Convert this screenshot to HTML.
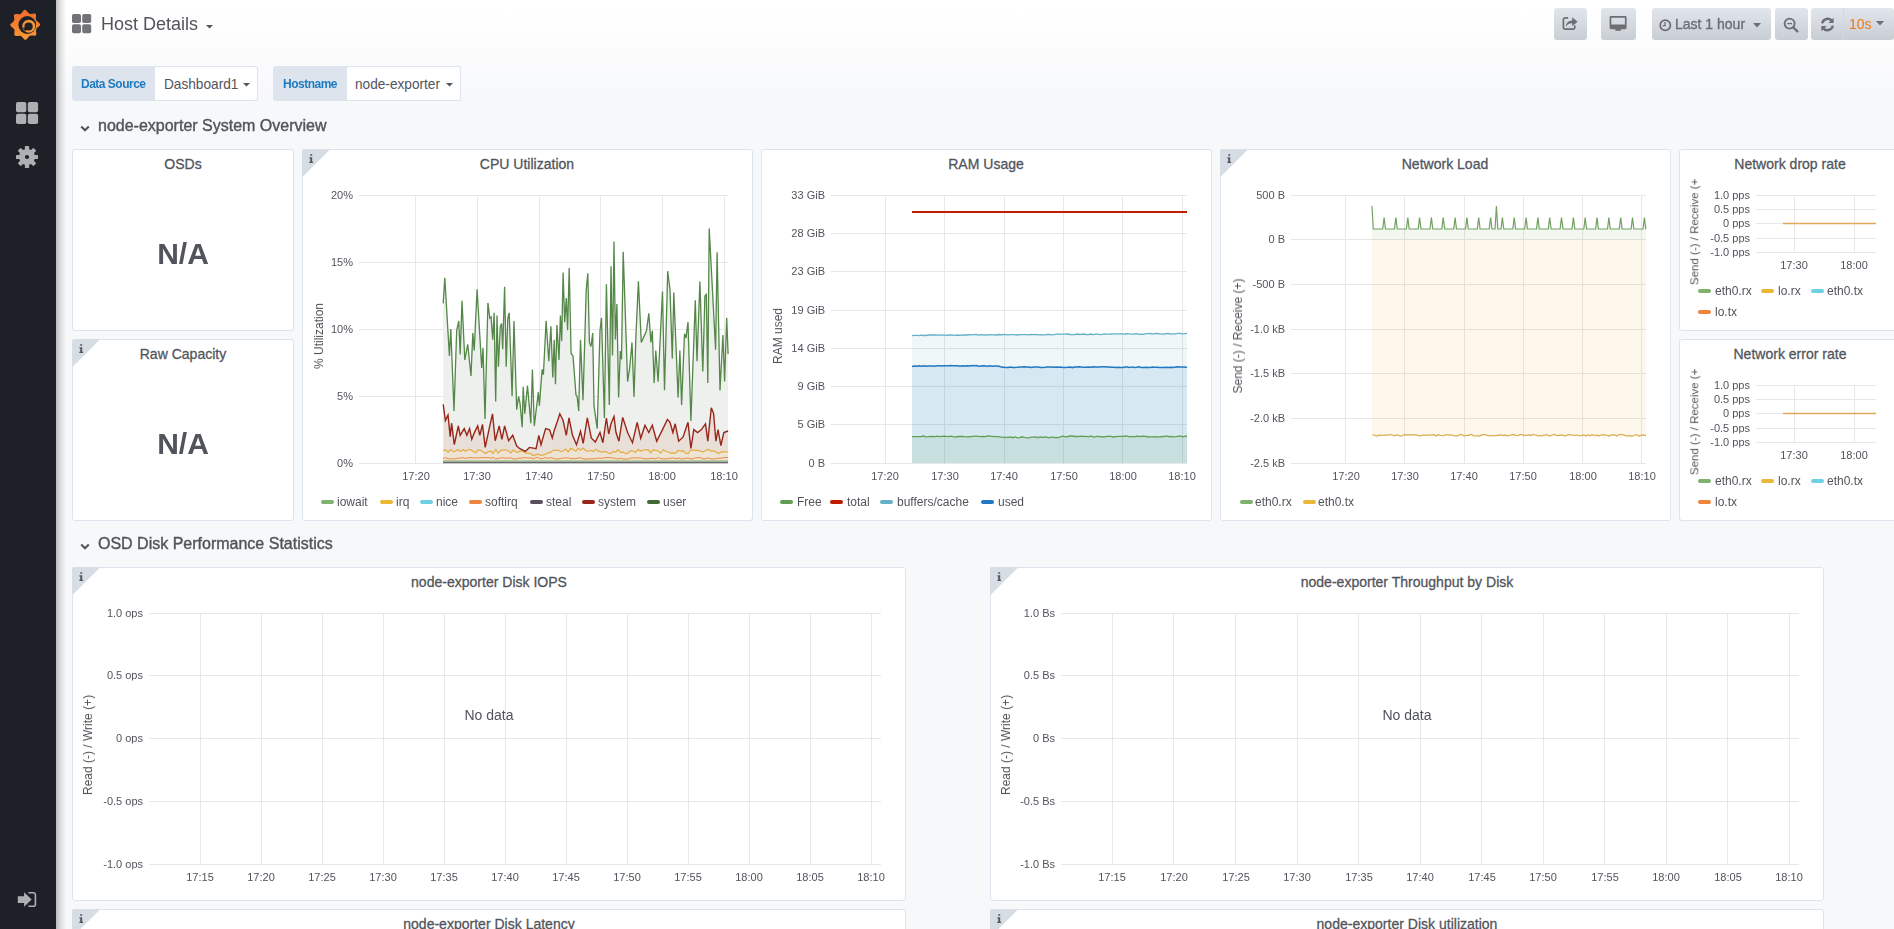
<!DOCTYPE html><html><head><meta charset="utf-8"><style>
*{box-sizing:border-box}
html,body{margin:0;padding:0;width:1894px;height:929px;overflow:hidden}
body{font-family:"Liberation Sans", sans-serif;color:#52545c;background:linear-gradient(180deg,#ffffff 10px,#f7f8fa 100px);position:relative}
.abs{position:absolute}
.t{position:absolute;white-space:nowrap;line-height:1;transform:translateY(-50%);will-change:transform}
.te{transform:translate(-100%,-50%)}
.tm{transform:translate(-50%,-50%)}
.panel{position:absolute;background:#fff;border:1px solid #dde4ed;border-radius:3px;box-sizing:content-box}
.btn{position:absolute;top:8px;height:32px;border-radius:3px;background:linear-gradient(180deg,#e1e6ec,#c9ced4);}
.lg{position:absolute;width:13px;height:4px;border-radius:2px}
</style></head><body>
<div class="abs" style="left:0;top:0;width:56px;height:929px;background:#1e2028"></div>
<div class="abs" style="left:56px;top:0;width:10px;height:929px;background:linear-gradient(90deg,rgba(0,0,0,0.25),rgba(0,0,0,0.12) 40%,rgba(0,0,0,0))"></div>
<svg class="abs" style="left:0;top:0" width="56" height="56"><defs><linearGradient id="lg1" x1="0" y1="1" x2="0" y2="0"><stop offset="0" stop-color="#f79a35"/><stop offset="1" stop-color="#f26a2c"/></linearGradient></defs><path d="M24.91 9.80C26.43 9.77 27.76 13.02 29.54 13.72C31.32 14.42 34.51 12.94 35.60 13.99C36.69 15.04 35.34 18.28 36.10 20.04C36.87 21.79 40.17 22.99 40.20 24.51C40.23 26.03 36.98 27.36 36.28 29.14C35.58 30.92 37.06 34.11 36.01 35.20C34.96 36.29 31.72 34.94 29.96 35.70C28.21 36.47 27.01 39.77 25.49 39.80C23.97 39.83 22.64 36.58 20.86 35.88C19.08 35.18 15.89 36.66 14.80 35.61C13.71 34.56 15.06 31.32 14.30 29.56C13.53 27.81 10.23 26.61 10.20 25.09C10.17 23.57 13.42 22.24 14.12 20.46C14.82 18.68 13.34 15.49 14.39 14.40C15.44 13.31 18.68 14.66 20.44 13.90C22.19 13.13 23.39 9.83 24.91 9.80Z" fill="url(#lg1)"/><circle cx="27.3" cy="25.0" r="8.9" fill="#1e2028"/><circle cx="28.8" cy="26.2" r="6.5" fill="#f39436"/><circle cx="28.6" cy="26.5" r="4.1" fill="#1e2028"/><path d="M22.5 27.8L26.8 27.5L25.5 31.5Z" fill="#1e2028"/></svg>
<svg class="abs" style="left:16px;top:102px" width="23" height="23" fill="#aeafb3"><rect x="0" y="0" width="10.3" height="10.3" rx="1.8"/><rect x="11.8" y="0" width="10.3" height="10.3" rx="1.8"/><rect x="0" y="11.8" width="10.3" height="10.3" rx="1.8"/><rect x="11.8" y="11.8" width="10.3" height="10.3" rx="1.8"/></svg>
<svg class="abs" style="left:16px;top:146px" width="22" height="22" fill="#aeafb3"><circle cx="11" cy="11" r="8"/><rect x="8.9" y="0" width="4.2" height="6" rx="0.6" transform="rotate(0 11 11)"/><rect x="8.9" y="0" width="4.2" height="6" rx="0.6" transform="rotate(45 11 11)"/><rect x="8.9" y="0" width="4.2" height="6" rx="0.6" transform="rotate(90 11 11)"/><rect x="8.9" y="0" width="4.2" height="6" rx="0.6" transform="rotate(135 11 11)"/><rect x="8.9" y="0" width="4.2" height="6" rx="0.6" transform="rotate(180 11 11)"/><rect x="8.9" y="0" width="4.2" height="6" rx="0.6" transform="rotate(225 11 11)"/><rect x="8.9" y="0" width="4.2" height="6" rx="0.6" transform="rotate(270 11 11)"/><rect x="8.9" y="0" width="4.2" height="6" rx="0.6" transform="rotate(315 11 11)"/><circle cx="11" cy="11" r="2.1" fill="#1e2028"/></svg>
<svg class="abs" style="left:17px;top:890px" width="20" height="18" fill="#aeafb3"><path d="M0.8 6.3H7.1V2.2L14.7 9.5L7.1 16.8V13H0.8z"/><path d="M11.4 2.7H16.4a2 2 0 0 1 2 2V14.3a2 2 0 0 1-2 2H11.4" fill="none" stroke="#aeafb3" stroke-width="1.6"/></svg>
<svg class="abs" style="left:72px;top:14px" width="20" height="20" fill="#717379"><rect x="0" y="0" width="9" height="9" rx="1.8"/><rect x="10.2" y="0" width="9" height="9" rx="1.8"/><rect x="0" y="10.2" width="9" height="9" rx="1.8"/><rect x="10.2" y="10.2" width="9" height="9" rx="1.8"/></svg>
<div class="t" style="left:101px;top:24px;font-size:18px;color:#52545c;font-weight:normal;">Host Details</div>
<svg class="abs" style="left:206px;top:25px" width="8" height="4"><path d="M0 0H7L3.5 3.5Z" fill="#52545c"/></svg>
<div class="btn" style="left:1554px;width:33px"></div>
<svg class="abs" style="left:1562px;top:15px" width="17" height="17"><path d="M6.2 2.8H3.2a1.8 1.8 0 0 0-1.8 1.8V12.4a1.8 1.8 0 0 0 1.8 1.8H11a1.8 1.8 0 0 0 1.8-1.8V10.6" fill="none" stroke="#6c6e74" stroke-width="1.7"/><path d="M3.8 11.8C4 7.8 6.4 5.6 10.2 5.4V2.2L15.6 6.8L10.2 11.2V8.3C7.4 8.2 5.5 9.3 3.8 11.8z" fill="#6c6e74"/></svg>
<div class="btn" style="left:1601px;width:35px"></div>
<svg class="abs" style="left:1609px;top:15px" width="19" height="17" fill="#6c6e74"><path d="M2 1h14.2a1.4 1.4 0 0 1 1.4 1.4v10.4a1.4 1.4 0 0 1-1.4 1.4H2a1.4 1.4 0 0 1-1.4-1.4V2.4A1.4 1.4 0 0 1 2 1zM2.3 2.7v6.7h13.6V2.7z"/><rect x="6.3" y="14" width="5.6" height="1.8"/></svg>
<div class="btn" style="left:1652px;width:119px"></div>
<svg class="abs" style="left:1659px;top:19px" width="13" height="13"><circle cx="6.3" cy="6.3" r="5.1" fill="none" stroke="#6c6e74" stroke-width="1.7"/><path d="M6 3v3.6H3.7" fill="none" stroke="#6c6e74" stroke-width="1.3"/></svg>
<div class="t" style="left:1675px;top:24px;font-size:14px;color:#6c6e74;font-weight:normal;-webkit-text-stroke:0.35px #6c6e74">Last 1 hour</div>
<svg class="abs" style="left:1753px;top:23px" width="8" height="5"><path d="M0 0H8L4 4.5Z" fill="#6c6e74"/></svg>
<div class="btn" style="left:1775px;width:33px"></div>
<svg class="abs" style="left:1783px;top:17px" width="16" height="16"><circle cx="6.6" cy="6.6" r="5" fill="none" stroke="#6c6e74" stroke-width="1.9"/><path d="M10.2 10.2L14.4 14.4" stroke="#6c6e74" stroke-width="2.2" stroke-linecap="round"/><path d="M4.2 6.6H9" stroke="#6c6e74" stroke-width="1.3"/></svg>
<div class="btn" style="left:1811px;width:83px"></div>
<div class="abs" style="left:1843px;top:8px;width:1px;height:32px;background:#d4d9df"></div>
<svg class="abs" style="left:1820px;top:17px" width="15" height="15"><path d="M2.2 6.4A5.5 5.5 0 0 1 12.2 4.3" fill="none" stroke="#6c6e74" stroke-width="2.4"/><path d="M13.6 0.8V6H8.4z" fill="#6c6e74"/><path d="M12.8 8.6A5.5 5.5 0 0 1 2.8 10.7" fill="none" stroke="#6c6e74" stroke-width="2.4"/><path d="M1.4 14.2V9H6.6z" fill="#6c6e74"/></svg>
<div class="t" style="left:1849px;top:24px;font-size:14px;color:#eb7b18;font-weight:normal;">10s</div>
<svg class="abs" style="left:1876px;top:21px" width="8" height="5"><path d="M0 0H8L4 4.5Z" fill="#6c6e74"/></svg>
<div class="abs" style="left:72px;top:66px;width:83px;height:35px;background:#dde4ed;border-radius:3px 0 0 3px"></div>
<div class="t" style="left:81px;top:84px;font-size:12px;color:#1f7bbf;font-weight:bold;letter-spacing:-0.5px">Data Source</div>
<div class="abs" style="left:155px;top:66px;width:103px;height:35px;background:#fff;border:1px solid #dde4ed;border-left:none;border-radius:0 3px 3px 0"></div>
<div class="t" style="left:164px;top:83.3px;font-size:15px;color:#52545c;transform:translateY(-50%) scaleX(0.91);transform-origin:0 50%;will-change:auto">Dashboard1</div>
<svg class="abs" style="left:243px;top:83px" width="8" height="5"><path d="M0 0H7L3.5 3.5Z" fill="#52545c"/></svg>
<div class="abs" style="left:273px;top:66px;width:74px;height:35px;background:#dde4ed;border-radius:3px 0 0 3px"></div>
<div class="t" style="left:283px;top:84px;font-size:12px;color:#1f7bbf;font-weight:bold;letter-spacing:-0.5px">Hostname</div>
<div class="abs" style="left:347px;top:66px;width:114px;height:35px;background:#fff;border:1px solid #dde4ed;border-left:none;border-radius:0 3px 3px 0"></div>
<div class="t" style="left:355px;top:83.3px;font-size:15px;color:#52545c;transform:translateY(-50%) scaleX(0.91);transform-origin:0 50%;will-change:auto">node-exporter</div>
<svg class="abs" style="left:446px;top:83px" width="8" height="5"><path d="M0 0H7L3.5 3.5Z" fill="#52545c"/></svg>
<svg class="abs" style="left:80px;top:125px" width="11" height="8"><path d="M1.2 1.5L5 5.3L8.8 1.5" fill="none" stroke="#52545c" stroke-width="2"/></svg>
<div class="t" style="left:98px;top:126px;font-size:16px;color:#52545c;font-weight:normal;-webkit-text-stroke:0.4px #52545c">node-exporter System Overview</div>
<svg class="abs" style="left:80px;top:543px" width="11" height="8"><path d="M1.2 1.5L5 5.3L8.8 1.5" fill="none" stroke="#52545c" stroke-width="2"/></svg>
<div class="t" style="left:98px;top:544px;font-size:16px;color:#52545c;font-weight:normal;-webkit-text-stroke:0.4px #52545c">OSD Disk Performance Statistics</div>
<div class="panel" style="left:72px;top:149px;width:220px;height:180px"></div><div class="t" style="left:182.5px;top:162.9px;font-size:15px;color:#52545c;transform:translate(-50%,-50%) scaleX(0.935);will-change:auto;-webkit-text-stroke:0.3px #52545c">OSDs</div>
<div class="panel" style="left:72px;top:339px;width:220px;height:180px"></div><svg class="abs" style="left:72px;top:339px" width="29" height="29"><path d="M2 0H28.5L0 28.5V2A2 2 0 0 1 2 0Z" fill="#d7dde5"/><path d="M8.2 5.2h2v1.6h-2zM7.4 8.2h2.8v4.6h0.9v1.2H7.3v-1.2h0.9V9.4h-0.8z" fill="#55575e"/></svg><div class="t" style="left:182.5px;top:352.9px;font-size:15px;color:#52545c;transform:translate(-50%,-50%) scaleX(0.935);will-change:auto;-webkit-text-stroke:0.3px #52545c">Raw Capacity</div>
<div class="panel" style="left:302px;top:149px;width:449px;height:370px"></div><svg class="abs" style="left:302px;top:149px" width="29" height="29"><path d="M2 0H28.5L0 28.5V2A2 2 0 0 1 2 0Z" fill="#d7dde5"/><path d="M8.2 5.2h2v1.6h-2zM7.4 8.2h2.8v4.6h0.9v1.2H7.3v-1.2h0.9V9.4h-0.8z" fill="#55575e"/></svg><div class="t" style="left:527.0px;top:162.9px;font-size:15px;color:#52545c;transform:translate(-50%,-50%) scaleX(0.935);will-change:auto;-webkit-text-stroke:0.3px #52545c">CPU Utilization</div>
<div class="panel" style="left:761px;top:149px;width:449px;height:370px"></div><div class="t" style="left:986.0px;top:162.9px;font-size:15px;color:#52545c;transform:translate(-50%,-50%) scaleX(0.935);will-change:auto;-webkit-text-stroke:0.3px #52545c">RAM Usage</div>
<div class="panel" style="left:1220px;top:149px;width:449px;height:370px"></div><svg class="abs" style="left:1220px;top:149px" width="29" height="29"><path d="M2 0H28.5L0 28.5V2A2 2 0 0 1 2 0Z" fill="#d7dde5"/><path d="M8.2 5.2h2v1.6h-2zM7.4 8.2h2.8v4.6h0.9v1.2H7.3v-1.2h0.9V9.4h-0.8z" fill="#55575e"/></svg><div class="t" style="left:1445.0px;top:162.9px;font-size:15px;color:#52545c;transform:translate(-50%,-50%) scaleX(0.935);will-change:auto;-webkit-text-stroke:0.3px #52545c">Network Load</div>
<div class="panel" style="left:1679px;top:149px;width:221px;height:180px"></div><div class="t" style="left:1789.5px;top:162.9px;font-size:15px;color:#52545c;transform:translate(-50%,-50%) scaleX(0.935);will-change:auto;-webkit-text-stroke:0.3px #52545c">Network drop rate</div>
<div class="panel" style="left:1679px;top:339px;width:221px;height:180px"></div><div class="t" style="left:1789.5px;top:352.9px;font-size:15px;color:#52545c;transform:translate(-50%,-50%) scaleX(0.935);will-change:auto;-webkit-text-stroke:0.3px #52545c">Network error rate</div>
<div class="panel" style="left:72px;top:567px;width:832px;height:332px"></div><svg class="abs" style="left:72px;top:567px" width="29" height="29"><path d="M2 0H28.5L0 28.5V2A2 2 0 0 1 2 0Z" fill="#d7dde5"/><path d="M8.2 5.2h2v1.6h-2zM7.4 8.2h2.8v4.6h0.9v1.2H7.3v-1.2h0.9V9.4h-0.8z" fill="#55575e"/></svg><div class="t" style="left:488.5px;top:580.9px;font-size:15px;color:#52545c;transform:translate(-50%,-50%) scaleX(0.935);will-change:auto;-webkit-text-stroke:0.3px #52545c">node-exporter Disk IOPS</div>
<div class="panel" style="left:990px;top:567px;width:832px;height:332px"></div><svg class="abs" style="left:990px;top:567px" width="29" height="29"><path d="M2 0H28.5L0 28.5V2A2 2 0 0 1 2 0Z" fill="#d7dde5"/><path d="M8.2 5.2h2v1.6h-2zM7.4 8.2h2.8v4.6h0.9v1.2H7.3v-1.2h0.9V9.4h-0.8z" fill="#55575e"/></svg><div class="t" style="left:1406.5px;top:580.9px;font-size:15px;color:#52545c;transform:translate(-50%,-50%) scaleX(0.935);will-change:auto;-webkit-text-stroke:0.3px #52545c">node-exporter Throughput by Disk</div>
<div class="panel" style="left:72px;top:909px;width:832px;height:390px"></div><svg class="abs" style="left:72px;top:909px" width="29" height="29"><path d="M2 0H28.5L0 28.5V2A2 2 0 0 1 2 0Z" fill="#d7dde5"/><path d="M8.2 5.2h2v1.6h-2zM7.4 8.2h2.8v4.6h0.9v1.2H7.3v-1.2h0.9V9.4h-0.8z" fill="#55575e"/></svg><div class="t" style="left:488.5px;top:922.9px;font-size:15px;color:#52545c;transform:translate(-50%,-50%) scaleX(0.935);will-change:auto;-webkit-text-stroke:0.3px #52545c">node-exporter Disk Latency</div>
<div class="panel" style="left:990px;top:909px;width:832px;height:390px"></div><svg class="abs" style="left:990px;top:909px" width="29" height="29"><path d="M2 0H28.5L0 28.5V2A2 2 0 0 1 2 0Z" fill="#d7dde5"/><path d="M8.2 5.2h2v1.6h-2zM7.4 8.2h2.8v4.6h0.9v1.2H7.3v-1.2h0.9V9.4h-0.8z" fill="#55575e"/></svg><div class="t" style="left:1406.5px;top:922.9px;font-size:15px;color:#52545c;transform:translate(-50%,-50%) scaleX(0.935);will-change:auto;-webkit-text-stroke:0.3px #52545c">node-exporter Disk utilization</div>
<svg class="abs" style="left:0;top:0" width="1894" height="929"><path d="M359 195.5H728" stroke="#e7e7e7" stroke-width="1"/><path d="M359 262.5H728" stroke="#e7e7e7" stroke-width="1"/><path d="M359 329.5H728" stroke="#e7e7e7" stroke-width="1"/><path d="M359 396.5H728" stroke="#e7e7e7" stroke-width="1"/><path d="M359 463.5H728" stroke="#e7e7e7" stroke-width="1"/><path d="M415.5 195V463" stroke="#e7e7e7" stroke-width="1"/><path d="M477.5 195V463" stroke="#e7e7e7" stroke-width="1"/><path d="M539.5 195V463" stroke="#e7e7e7" stroke-width="1"/><path d="M600.5 195V463" stroke="#e7e7e7" stroke-width="1"/><path d="M662.5 195V463" stroke="#e7e7e7" stroke-width="1"/><path d="M724.5 195V463" stroke="#e7e7e7" stroke-width="1"/><path d="M443.2 303.4L444.8 277.9L449.4 355.9L450.8 329.0L454.0 411.0L456.7 330.3L458.8 321.0L460.2 354.5L462.0 300.7L464.8 360.0L467.7 344.3L471.0 376.0L472.8 333.0L474.2 350.5L477.1 289.4L481.7 368.0L483.0 347.8L485.0 419.0L487.9 302.9L489.8 318.2L491.1 316.9L492.7 339.8L494.1 312.8L495.7 401.6L497.0 315.5L498.4 366.7L500.3 326.3L501.6 323.6L502.7 349.2L504.6 286.7L506.2 366.7L507.8 318.2L509.2 312.8L512.1 396.3L514.0 321.0L516.7 409.7L518.6 396.3L520.0 403.0L522.2 427.2L523.2 386.8L524.8 413.8L527.5 385.5L530.8 423.2L532.4 369.4L534.3 425.9L538.3 392.2L539.4 405.7L542.1 369.4L543.4 374.7L546.1 320.9L548.8 361.3L550.9 326.3L552.8 377.4L554.2 339.8L555.5 384.2L556.9 325.0L559.0 359.9L560.4 315.5L561.7 341.1L563.1 272.5L564.7 322.3L566.3 298.0L567.6 330.3L569.2 267.9L571.1 353.2L573.0 355.9L576.0 394.9L577.1 396.3L578.7 411.0L580.5 339.8L583.0 400.3L586.2 290.0L587.8 273.3L589.4 342.4L591.0 346.5L592.7 333.0L594.0 405.7L597.2 428.6L600.0 330.8L601.5 317.7L604.4 418.0L606.4 284.3L609.3 404.9L611.0 266.3L612.5 355.5L614.0 241.6L615.4 339.5L616.9 304.0L618.6 397.6L620.3 351.1L621.5 359.3L623.2 251.7L627.6 381.6L629.6 368.6L632.0 342.4L634.0 397.0L636.0 333.7L638.4 281.4L641.3 342.4L646.5 330.8L648.8 313.3L650.9 342.4L652.3 330.8L654.1 383.1L655.8 350.5L658.1 381.6L662.5 291.5L664.5 390.3L667.7 271.2L670.0 290.0L672.3 358.4L673.8 292.4L678.1 397.6L679.9 350.5L681.6 404.9L684.5 333.7L686.0 338.0L688.0 322.0L690.9 420.9L695.3 300.3L697.0 361.3L699.9 281.4L702.8 371.5L704.9 295.9L706.3 294.4L707.8 383.1L709.2 228.5L715.6 349.7L717.1 252.3L720.0 390.4L722.9 335.1L724.6 381.6L726.7 317.7L728.1 354.0L728.1 431.0L723.8 432.5L720.9 445.6L718.0 429.6L715.9 441.2L713.6 413.6L711.3 407.8L707.8 441.2L705.5 423.8L701.4 429.6L697.6 432.5L693.8 429.6L690.9 448.5L688.0 422.3L683.1 436.9L678.7 441.2L675.2 423.8L672.9 432.5L670.0 422.3L667.4 419.4L662.5 429.6L656.7 441.2L652.3 425.2L648.8 432.5L645.0 425.2L640.7 438.3L637.2 422.3L632.5 442.7L627.6 432.5L622.7 417.4L618.9 441.2L616.0 432.5L614.0 416.5L611.0 423.8L608.7 434.0L606.4 418.0L602.9 442.7L600.0 432.5L595.3 442.0L591.3 438.0L587.3 417.8L583.2 443.4L580.5 431.2L576.5 444.7L572.5 435.3L569.0 417.8L566.3 435.3L563.1 420.5L559.8 413.8L557.7 420.5L554.4 429.9L552.3 438.0L549.6 429.9L545.6 428.6L541.0 444.7L538.8 435.3L536.1 448.7L529.4 447.4L525.4 451.4L519.9 448.7L516.7 446.0L512.7 435.3L508.6 440.7L504.6 425.9L501.9 439.3L499.2 425.9L495.2 440.7L492.5 413.8L489.8 425.9L485.2 447.4L482.5 424.5L479.8 435.3L477.7 425.9L474.4 432.6L471.8 439.3L469.6 428.6L466.9 435.3L464.2 428.6L460.2 435.3L458.3 425.9L454.3 444.7L451.6 423.2L450.2 436.6L448.0 415.0L445.4 420.5L443.2 404.3Z" fill="#edf0ec"/><path d="M443.2 404.3L445.4 420.5L448.0 415.0L450.2 436.6L451.6 423.2L454.3 444.7L458.3 425.9L460.2 435.3L464.2 428.6L466.9 435.3L469.6 428.6L471.8 439.3L474.4 432.6L477.7 425.9L479.8 435.3L482.5 424.5L485.2 447.4L489.8 425.9L492.5 413.8L495.2 440.7L499.2 425.9L501.9 439.3L504.6 425.9L508.6 440.7L512.7 435.3L516.7 446.0L519.9 448.7L525.4 451.4L529.4 447.4L536.1 448.7L538.8 435.3L541.0 444.7L545.6 428.6L549.6 429.9L552.3 438.0L554.4 429.9L557.7 420.5L559.8 413.8L563.1 420.5L566.3 435.3L569.0 417.8L572.5 435.3L576.5 444.7L580.5 431.2L583.2 443.4L587.3 417.8L591.3 438.0L595.3 442.0L600.0 432.5L602.9 442.7L606.4 418.0L608.7 434.0L611.0 423.8L614.0 416.5L616.0 432.5L618.9 441.2L622.7 417.4L627.6 432.5L632.5 442.7L637.2 422.3L640.7 438.3L645.0 425.2L648.8 432.5L652.3 425.2L656.7 441.2L662.5 429.6L667.4 419.4L670.0 422.3L672.9 432.5L675.2 423.8L678.7 441.2L683.1 436.9L688.0 422.3L690.9 448.5L693.8 429.6L697.6 432.5L701.4 429.6L705.5 423.8L707.8 441.2L711.3 407.8L713.6 413.6L715.9 441.2L718.0 429.6L720.9 445.6L723.8 432.5L728.1 431.0L728.1 452.0L723.2 451.6L720.7 452.3L718.2 453.5L715.7 451.8L713.2 450.9L710.7 451.1L708.2 449.3L705.7 450.5L703.2 451.9L700.7 451.4L698.2 450.3L695.7 450.3L693.2 450.1L690.7 450.0L688.2 453.5L685.7 453.2L683.2 450.9L680.7 451.1L678.2 450.5L675.7 453.1L673.2 452.9L670.7 453.2L668.2 451.7L665.7 451.3L663.2 449.7L660.7 453.1L658.2 451.0L655.7 450.4L653.2 449.9L650.7 452.7L648.2 449.6L645.7 449.8L643.2 450.0L640.7 451.3L638.2 449.4L635.7 452.2L633.2 451.0L630.7 450.6L628.2 452.9L625.7 453.7L623.2 452.1L620.7 452.4L618.2 449.6L615.7 452.2L613.2 451.4L610.7 453.5L608.2 453.0L605.7 451.3L603.2 451.9L600.7 451.9L598.2 450.9L595.7 449.2L593.2 451.7L590.7 450.3L588.2 451.2L585.7 450.7L583.2 448.0L580.7 450.0L578.2 448.5L575.7 451.1L573.2 449.6L570.7 448.3L568.2 452.1L565.7 449.1L563.2 451.0L560.7 451.7L558.2 450.1L555.7 450.3L553.2 450.4L550.7 452.4L548.2 452.8L545.7 454.1L543.2 454.8L540.7 455.4L538.2 454.2L535.7 454.7L533.2 455.8L530.7 453.7L528.2 453.1L525.7 453.1L523.2 451.7L520.7 450.9L518.2 452.1L515.7 451.9L513.2 450.1L510.7 452.9L508.2 450.7L505.7 449.8L503.2 449.9L500.7 450.6L498.2 453.1L495.7 449.5L493.2 453.6L490.7 451.0L488.2 451.8L485.7 453.5L483.2 452.1L480.7 450.3L478.2 449.8L475.7 452.9L473.2 451.2L470.7 449.7L468.2 449.6L465.7 451.2L463.2 449.5L460.7 451.5L458.2 449.6L455.7 450.9L453.2 451.7L450.7 449.6L448.2 452.2L445.7 450.0L443.2 450.7Z" fill="#e7dfd8"/><path d="M443.2 450.7L445.7 450.0L448.2 452.2L450.7 449.6L453.2 451.7L455.7 450.9L458.2 449.6L460.7 451.5L463.2 449.5L465.7 451.2L468.2 449.6L470.7 449.7L473.2 451.2L475.7 452.9L478.2 449.8L480.7 450.3L483.2 452.1L485.7 453.5L488.2 451.8L490.7 451.0L493.2 453.6L495.7 449.5L498.2 453.1L500.7 450.6L503.2 449.9L505.7 449.8L508.2 450.7L510.7 452.9L513.2 450.1L515.7 451.9L518.2 452.1L520.7 450.9L523.2 451.7L525.7 453.1L528.2 453.1L530.7 453.7L533.2 455.8L535.7 454.7L538.2 454.2L540.7 455.4L543.2 454.8L545.7 454.1L548.2 452.8L550.7 452.4L553.2 450.4L555.7 450.3L558.2 450.1L560.7 451.7L563.2 451.0L565.7 449.1L568.2 452.1L570.7 448.3L573.2 449.6L575.7 451.1L578.2 448.5L580.7 450.0L583.2 448.0L585.7 450.7L588.2 451.2L590.7 450.3L593.2 451.7L595.7 449.2L598.2 450.9L600.7 451.9L603.2 451.9L605.7 451.3L608.2 453.0L610.7 453.5L613.2 451.4L615.7 452.2L618.2 449.6L620.7 452.4L623.2 452.1L625.7 453.7L628.2 452.9L630.7 450.6L633.2 451.0L635.7 452.2L638.2 449.4L640.7 451.3L643.2 450.0L645.7 449.8L648.2 449.6L650.7 452.7L653.2 449.9L655.7 450.4L658.2 451.0L660.7 453.1L663.2 449.7L665.7 451.3L668.2 451.7L670.7 453.2L673.2 452.9L675.7 453.1L678.2 450.5L680.7 451.1L683.2 450.9L685.7 453.2L688.2 453.5L690.7 450.0L693.2 450.1L695.7 450.3L698.2 450.3L700.7 451.4L703.2 451.9L705.7 450.5L708.2 449.3L710.7 451.1L713.2 450.9L715.7 451.8L718.2 453.5L720.7 452.3L723.2 451.6L728.1 452.0L728.1 463.0L443.2 463.0Z" fill="#ede4d6"/><path d="M443.2 458.6L445.7 457.6L448.2 458.9L450.7 458.7L453.2 458.9L455.7 458.8L458.2 458.1L460.7 458.1L463.2 457.7L465.7 458.5L468.2 457.6L470.7 457.6L473.2 457.8L475.7 457.8L478.2 458.0L480.7 457.6L483.2 457.5L485.7 457.7L488.2 457.7L490.7 458.1L493.2 457.5L495.7 458.9L498.2 458.5L500.7 457.7L503.2 457.9L505.7 458.1L508.2 458.1L510.7 457.7L513.2 458.9L515.7 459.1L518.2 458.2L520.7 458.3L523.2 457.6L525.7 457.7L528.2 458.0L530.7 457.9L533.2 458.8L535.7 457.8L538.2 457.5L540.7 459.0L543.2 458.3L545.7 457.7L548.2 458.4L550.7 457.5L553.2 458.3L555.7 459.1L558.2 458.9L560.7 458.6L563.2 457.9L565.7 458.1L568.2 457.8L570.7 458.7L573.2 458.4L575.7 458.7L578.2 458.0L580.7 457.9L583.2 458.8L585.7 459.1L588.2 458.9L590.7 458.8L593.2 458.8L595.7 458.7L598.2 457.9L600.7 458.3L603.2 458.1L605.7 457.5L608.2 457.5L610.7 457.9L613.2 457.9L615.7 458.6L618.2 459.0L620.7 458.2L623.2 459.0L625.7 459.1L628.2 459.0L630.7 458.1L633.2 457.9L635.7 457.9L638.2 457.8L640.7 457.8L643.2 458.5L645.7 458.9L648.2 458.8L650.7 458.3L653.2 458.5L655.7 458.8L658.2 457.6L660.7 458.6L663.2 459.0L665.7 458.8L668.2 458.7L670.7 458.3L673.2 457.8L675.7 458.8L678.2 458.0L680.7 458.8L683.2 459.1L685.7 458.1L688.2 458.1L690.7 459.0L693.2 458.7L695.7 457.8L698.2 457.7L700.7 457.7L703.2 458.9L705.7 458.8L708.2 457.7L710.7 458.8L713.2 459.1L715.7 458.6L718.2 458.1L720.7 458.4L723.2 457.7L728.1 457.5" fill="none" stroke="#ef843c" stroke-width="1"/><path d="M443.2 450.7L445.7 450.0L448.2 452.2L450.7 449.6L453.2 451.7L455.7 450.9L458.2 449.6L460.7 451.5L463.2 449.5L465.7 451.2L468.2 449.6L470.7 449.7L473.2 451.2L475.7 452.9L478.2 449.8L480.7 450.3L483.2 452.1L485.7 453.5L488.2 451.8L490.7 451.0L493.2 453.6L495.7 449.5L498.2 453.1L500.7 450.6L503.2 449.9L505.7 449.8L508.2 450.7L510.7 452.9L513.2 450.1L515.7 451.9L518.2 452.1L520.7 450.9L523.2 451.7L525.7 453.1L528.2 453.1L530.7 453.7L533.2 455.8L535.7 454.7L538.2 454.2L540.7 455.4L543.2 454.8L545.7 454.1L548.2 452.8L550.7 452.4L553.2 450.4L555.7 450.3L558.2 450.1L560.7 451.7L563.2 451.0L565.7 449.1L568.2 452.1L570.7 448.3L573.2 449.6L575.7 451.1L578.2 448.5L580.7 450.0L583.2 448.0L585.7 450.7L588.2 451.2L590.7 450.3L593.2 451.7L595.7 449.2L598.2 450.9L600.7 451.9L603.2 451.9L605.7 451.3L608.2 453.0L610.7 453.5L613.2 451.4L615.7 452.2L618.2 449.6L620.7 452.4L623.2 452.1L625.7 453.7L628.2 452.9L630.7 450.6L633.2 451.0L635.7 452.2L638.2 449.4L640.7 451.3L643.2 450.0L645.7 449.8L648.2 449.6L650.7 452.7L653.2 449.9L655.7 450.4L658.2 451.0L660.7 453.1L663.2 449.7L665.7 451.3L668.2 451.7L670.7 453.2L673.2 452.9L675.7 453.1L678.2 450.5L680.7 451.1L683.2 450.9L685.7 453.2L688.2 453.5L690.7 450.0L693.2 450.1L695.7 450.3L698.2 450.3L700.7 451.4L703.2 451.9L705.7 450.5L708.2 449.3L710.7 451.1L713.2 450.9L715.7 451.8L718.2 453.5L720.7 452.3L723.2 451.6L728.1 452.0" fill="none" stroke="#e5ac3e" stroke-width="1.2"/><path d="M443.2 404.3L445.4 420.5L448.0 415.0L450.2 436.6L451.6 423.2L454.3 444.7L458.3 425.9L460.2 435.3L464.2 428.6L466.9 435.3L469.6 428.6L471.8 439.3L474.4 432.6L477.7 425.9L479.8 435.3L482.5 424.5L485.2 447.4L489.8 425.9L492.5 413.8L495.2 440.7L499.2 425.9L501.9 439.3L504.6 425.9L508.6 440.7L512.7 435.3L516.7 446.0L519.9 448.7L525.4 451.4L529.4 447.4L536.1 448.7L538.8 435.3L541.0 444.7L545.6 428.6L549.6 429.9L552.3 438.0L554.4 429.9L557.7 420.5L559.8 413.8L563.1 420.5L566.3 435.3L569.0 417.8L572.5 435.3L576.5 444.7L580.5 431.2L583.2 443.4L587.3 417.8L591.3 438.0L595.3 442.0L600.0 432.5L602.9 442.7L606.4 418.0L608.7 434.0L611.0 423.8L614.0 416.5L616.0 432.5L618.9 441.2L622.7 417.4L627.6 432.5L632.5 442.7L637.2 422.3L640.7 438.3L645.0 425.2L648.8 432.5L652.3 425.2L656.7 441.2L662.5 429.6L667.4 419.4L670.0 422.3L672.9 432.5L675.2 423.8L678.7 441.2L683.1 436.9L688.0 422.3L690.9 448.5L693.8 429.6L697.6 432.5L701.4 429.6L705.5 423.8L707.8 441.2L711.3 407.8L713.6 413.6L715.9 441.2L718.0 429.6L720.9 445.6L723.8 432.5L728.1 431.0" fill="none" stroke="#99261a" stroke-width="1.4"/><path d="M443.2 303.4L444.8 277.9L449.4 355.9L450.8 329.0L454.0 411.0L456.7 330.3L458.8 321.0L460.2 354.5L462.0 300.7L464.8 360.0L467.7 344.3L471.0 376.0L472.8 333.0L474.2 350.5L477.1 289.4L481.7 368.0L483.0 347.8L485.0 419.0L487.9 302.9L489.8 318.2L491.1 316.9L492.7 339.8L494.1 312.8L495.7 401.6L497.0 315.5L498.4 366.7L500.3 326.3L501.6 323.6L502.7 349.2L504.6 286.7L506.2 366.7L507.8 318.2L509.2 312.8L512.1 396.3L514.0 321.0L516.7 409.7L518.6 396.3L520.0 403.0L522.2 427.2L523.2 386.8L524.8 413.8L527.5 385.5L530.8 423.2L532.4 369.4L534.3 425.9L538.3 392.2L539.4 405.7L542.1 369.4L543.4 374.7L546.1 320.9L548.8 361.3L550.9 326.3L552.8 377.4L554.2 339.8L555.5 384.2L556.9 325.0L559.0 359.9L560.4 315.5L561.7 341.1L563.1 272.5L564.7 322.3L566.3 298.0L567.6 330.3L569.2 267.9L571.1 353.2L573.0 355.9L576.0 394.9L577.1 396.3L578.7 411.0L580.5 339.8L583.0 400.3L586.2 290.0L587.8 273.3L589.4 342.4L591.0 346.5L592.7 333.0L594.0 405.7L597.2 428.6L600.0 330.8L601.5 317.7L604.4 418.0L606.4 284.3L609.3 404.9L611.0 266.3L612.5 355.5L614.0 241.6L615.4 339.5L616.9 304.0L618.6 397.6L620.3 351.1L621.5 359.3L623.2 251.7L627.6 381.6L629.6 368.6L632.0 342.4L634.0 397.0L636.0 333.7L638.4 281.4L641.3 342.4L646.5 330.8L648.8 313.3L650.9 342.4L652.3 330.8L654.1 383.1L655.8 350.5L658.1 381.6L662.5 291.5L664.5 390.3L667.7 271.2L670.0 290.0L672.3 358.4L673.8 292.4L678.1 397.6L679.9 350.5L681.6 404.9L684.5 333.7L686.0 338.0L688.0 322.0L690.9 420.9L695.3 300.3L697.0 361.3L699.9 281.4L702.8 371.5L704.9 295.9L706.3 294.4L707.8 383.1L709.2 228.5L715.6 349.7L717.1 252.3L720.0 390.4L722.9 335.1L724.6 381.6L726.7 317.7L728.1 354.0" fill="none" stroke="#548748" stroke-width="1.3"/><path d="M443 461H728" stroke="#7eb26d" stroke-width="1"/><path d="M443 462.5H728" stroke="#6a6a70" stroke-width="1.6"/><path d="M831 195.5H1187" stroke="#e7e7e7" stroke-width="1"/><path d="M831 233.5H1187" stroke="#e7e7e7" stroke-width="1"/><path d="M831 271.5H1187" stroke="#e7e7e7" stroke-width="1"/><path d="M831 310.5H1187" stroke="#e7e7e7" stroke-width="1"/><path d="M831 348.5H1187" stroke="#e7e7e7" stroke-width="1"/><path d="M831 386.5H1187" stroke="#e7e7e7" stroke-width="1"/><path d="M831 424.5H1187" stroke="#e7e7e7" stroke-width="1"/><path d="M831 463.5H1187" stroke="#e7e7e7" stroke-width="1"/><path d="M885.5 195V463" stroke="#e7e7e7" stroke-width="1"/><path d="M944.5 195V463" stroke="#e7e7e7" stroke-width="1"/><path d="M1004.5 195V463" stroke="#e7e7e7" stroke-width="1"/><path d="M1063.5 195V463" stroke="#e7e7e7" stroke-width="1"/><path d="M1122.5 195V463" stroke="#e7e7e7" stroke-width="1"/><path d="M1182.5 195V463" stroke="#e7e7e7" stroke-width="1"/><path d="M912.0 335.7L914.3 335.4L916.6 335.3L918.9 335.6L921.2 335.2L923.5 335.5L925.8 335.5L928.0 335.0L930.3 335.0L932.6 335.0L934.9 335.0L937.2 335.2L939.5 334.9L941.8 335.1L944.1 334.8L946.4 335.4L948.7 335.0L951.0 335.0L953.2 335.1L955.5 335.4L957.8 335.0L960.1 335.3L962.4 335.0L964.7 335.0L967.0 335.0L969.3 334.6L971.6 334.9L973.9 334.7L976.2 334.5L978.5 335.1L980.8 334.6L983.0 334.9L985.3 335.0L987.6 334.9L989.9 334.7L992.2 334.8L994.5 334.8L996.8 335.0L999.1 334.5L1001.4 334.8L1003.7 334.5L1006.0 334.6L1008.2 334.9L1010.5 334.7L1012.8 334.7L1015.1 334.9L1017.4 335.0L1019.7 334.6L1022.0 334.7L1024.3 334.6L1026.6 334.6L1028.9 334.8L1031.2 334.5L1033.5 334.6L1035.8 334.5L1038.0 334.9L1040.3 334.7L1042.6 334.8L1044.9 334.9L1047.2 334.3L1049.5 334.5L1051.8 334.8L1054.1 334.7L1056.4 334.1L1058.7 334.1L1061.0 334.4L1063.2 334.1L1065.5 334.2L1067.8 334.0L1070.1 334.5L1072.4 334.6L1074.7 334.6L1077.0 334.0L1079.3 334.5L1081.6 334.4L1083.9 334.0L1086.2 334.6L1088.5 334.6L1090.8 334.0L1093.0 334.6L1095.3 334.1L1097.6 334.2L1099.9 334.6L1102.2 334.4L1104.5 333.9L1106.8 334.1L1109.1 334.1L1111.4 334.0L1113.7 333.8L1116.0 333.9L1118.2 334.2L1120.5 333.7L1122.8 334.1L1125.1 334.0L1127.4 333.6L1129.7 333.9L1132.0 334.1L1134.3 334.0L1136.6 333.6L1138.9 334.3L1141.2 334.2L1143.5 334.3L1145.8 333.6L1148.0 333.7L1150.3 333.5L1152.6 334.1L1154.9 333.7L1157.2 333.5L1159.5 333.8L1161.8 334.1L1164.1 334.0L1166.4 333.6L1168.7 333.5L1171.0 334.1L1173.2 333.8L1175.5 333.9L1177.8 333.4L1180.1 333.3L1182.4 333.8L1184.7 333.6L1187.0 333.3L1187.0 463L912.0 463Z" fill="#64b0c8" fill-opacity="0.1"/><path d="M912.0 366.4L914.3 366.1L916.6 366.2L918.9 365.7L921.2 366.3L923.5 365.7L925.8 366.3L928.0 366.0L930.3 365.9L932.6 366.0L934.9 366.3L937.2 365.8L939.5 365.7L941.8 366.0L944.1 365.8L946.4 365.7L948.7 365.7L951.0 365.6L953.2 365.8L955.5 365.8L957.8 365.8L960.1 366.2L962.4 365.8L964.7 366.0L967.0 365.7L969.3 365.9L971.6 365.6L973.9 365.8L976.2 365.6L978.5 366.2L980.8 366.0L983.0 365.8L985.3 366.0L987.6 366.3L989.9 365.7L992.2 366.3L994.5 365.9L996.8 366.0L999.1 366.3L1001.4 367.1L1003.7 367.2L1006.0 367.4L1008.2 367.6L1010.5 367.1L1012.8 367.5L1015.1 367.4L1017.4 367.3L1019.7 367.1L1022.0 367.1L1024.3 366.8L1026.6 366.9L1028.9 366.9L1031.2 367.4L1033.5 367.0L1035.8 366.9L1038.0 366.9L1040.3 367.5L1042.6 367.5L1044.9 367.3L1047.2 367.0L1049.5 367.0L1051.8 367.0L1054.1 367.2L1056.4 366.9L1058.7 367.2L1061.0 367.0L1063.2 367.6L1065.5 367.6L1067.8 367.2L1070.1 367.0L1072.4 367.6L1074.7 367.0L1077.0 367.1L1079.3 366.8L1081.6 367.1L1083.9 367.2L1086.2 367.2L1088.5 367.0L1090.8 367.2L1093.0 366.8L1095.3 367.0L1097.6 366.9L1099.9 367.1L1102.2 366.8L1104.5 366.8L1106.8 367.0L1109.1 367.0L1111.4 367.3L1113.7 367.2L1116.0 367.4L1118.2 367.3L1120.5 367.4L1122.8 367.5L1125.1 367.1L1127.4 367.1L1129.7 367.6L1132.0 366.9L1134.3 367.4L1136.6 367.3L1138.9 366.8L1141.2 367.5L1143.5 367.5L1145.8 367.3L1148.0 367.4L1150.3 367.4L1152.6 366.9L1154.9 367.2L1157.2 367.2L1159.5 367.5L1161.8 367.4L1164.1 367.5L1166.4 367.3L1168.7 367.5L1171.0 367.3L1173.2 367.4L1175.5 367.0L1177.8 366.8L1180.1 366.9L1182.4 367.1L1184.7 366.9L1187.0 367.5L1187.0 463L912.0 463Z" fill="#1f78c1" fill-opacity="0.12"/><path d="M912.0 436.6L914.3 436.6L916.6 436.6L918.9 436.7L921.2 436.5L923.5 436.0L925.8 436.8L928.0 436.7L930.3 436.5L932.6 436.5L934.9 436.7L937.2 436.1L939.5 436.7L941.8 436.3L944.1 436.1L946.4 436.3L948.7 436.7L951.0 436.2L953.2 436.7L955.5 437.0L957.8 436.5L960.1 436.4L962.4 436.5L964.7 436.7L967.0 436.8L969.3 436.6L971.6 436.6L973.9 436.1L976.2 436.1L978.5 436.3L980.8 436.7L983.0 436.3L985.3 436.6L987.6 436.0L989.9 436.1L992.2 436.3L994.5 436.7L996.8 436.7L999.1 436.7L1001.4 437.1L1003.7 437.3L1006.0 437.3L1008.2 437.3L1010.5 436.9L1012.8 437.7L1015.1 437.0L1017.4 437.8L1019.7 437.7L1022.0 436.8L1024.3 437.3L1026.6 437.6L1028.9 437.8L1031.2 437.2L1033.5 437.1L1035.8 437.0L1038.0 437.7L1040.3 437.0L1042.6 437.4L1044.9 436.9L1047.2 437.3L1049.5 437.8L1051.8 436.9L1054.1 437.6L1056.4 437.3L1058.7 437.7L1061.0 436.7L1063.2 436.2L1065.5 436.9L1067.8 436.5L1070.1 436.0L1072.4 436.0L1074.7 436.5L1077.0 436.5L1079.3 436.3L1081.6 436.1L1083.9 436.3L1086.2 436.3L1088.5 436.8L1090.8 436.0L1093.0 436.8L1095.3 436.8L1097.6 436.1L1099.9 436.9L1102.2 436.7L1104.5 436.9L1106.8 436.3L1109.1 436.4L1111.4 436.4L1113.7 437.0L1116.0 436.6L1118.2 436.4L1120.5 436.4L1122.8 436.3L1125.1 436.0L1127.4 436.1L1129.7 436.8L1132.0 436.3L1134.3 436.9L1136.6 436.2L1138.9 436.3L1141.2 436.5L1143.5 436.2L1145.8 436.4L1148.0 437.0L1150.3 436.9L1152.6 436.8L1154.9 436.6L1157.2 436.9L1159.5 436.9L1161.8 436.5L1164.1 436.7L1166.4 436.0L1168.7 436.7L1171.0 436.5L1173.2 436.8L1175.5 436.6L1177.8 436.3L1180.1 436.0L1182.4 436.9L1184.7 436.1L1187.0 436.5L1187.0 463L912.0 463Z" fill="#629e51" fill-opacity="0.12"/><path d="M912 212H1187" stroke="#c41c02" stroke-width="2.2"/><path d="M912.0 335.7L914.3 335.4L916.6 335.3L918.9 335.6L921.2 335.2L923.5 335.5L925.8 335.5L928.0 335.0L930.3 335.0L932.6 335.0L934.9 335.0L937.2 335.2L939.5 334.9L941.8 335.1L944.1 334.8L946.4 335.4L948.7 335.0L951.0 335.0L953.2 335.1L955.5 335.4L957.8 335.0L960.1 335.3L962.4 335.0L964.7 335.0L967.0 335.0L969.3 334.6L971.6 334.9L973.9 334.7L976.2 334.5L978.5 335.1L980.8 334.6L983.0 334.9L985.3 335.0L987.6 334.9L989.9 334.7L992.2 334.8L994.5 334.8L996.8 335.0L999.1 334.5L1001.4 334.8L1003.7 334.5L1006.0 334.6L1008.2 334.9L1010.5 334.7L1012.8 334.7L1015.1 334.9L1017.4 335.0L1019.7 334.6L1022.0 334.7L1024.3 334.6L1026.6 334.6L1028.9 334.8L1031.2 334.5L1033.5 334.6L1035.8 334.5L1038.0 334.9L1040.3 334.7L1042.6 334.8L1044.9 334.9L1047.2 334.3L1049.5 334.5L1051.8 334.8L1054.1 334.7L1056.4 334.1L1058.7 334.1L1061.0 334.4L1063.2 334.1L1065.5 334.2L1067.8 334.0L1070.1 334.5L1072.4 334.6L1074.7 334.6L1077.0 334.0L1079.3 334.5L1081.6 334.4L1083.9 334.0L1086.2 334.6L1088.5 334.6L1090.8 334.0L1093.0 334.6L1095.3 334.1L1097.6 334.2L1099.9 334.6L1102.2 334.4L1104.5 333.9L1106.8 334.1L1109.1 334.1L1111.4 334.0L1113.7 333.8L1116.0 333.9L1118.2 334.2L1120.5 333.7L1122.8 334.1L1125.1 334.0L1127.4 333.6L1129.7 333.9L1132.0 334.1L1134.3 334.0L1136.6 333.6L1138.9 334.3L1141.2 334.2L1143.5 334.3L1145.8 333.6L1148.0 333.7L1150.3 333.5L1152.6 334.1L1154.9 333.7L1157.2 333.5L1159.5 333.8L1161.8 334.1L1164.1 334.0L1166.4 333.6L1168.7 333.5L1171.0 334.1L1173.2 333.8L1175.5 333.9L1177.8 333.4L1180.1 333.3L1182.4 333.8L1184.7 333.6L1187.0 333.3" fill="none" stroke="#64b0c8" stroke-width="1.3"/><path d="M912.0 366.4L914.3 366.1L916.6 366.2L918.9 365.7L921.2 366.3L923.5 365.7L925.8 366.3L928.0 366.0L930.3 365.9L932.6 366.0L934.9 366.3L937.2 365.8L939.5 365.7L941.8 366.0L944.1 365.8L946.4 365.7L948.7 365.7L951.0 365.6L953.2 365.8L955.5 365.8L957.8 365.8L960.1 366.2L962.4 365.8L964.7 366.0L967.0 365.7L969.3 365.9L971.6 365.6L973.9 365.8L976.2 365.6L978.5 366.2L980.8 366.0L983.0 365.8L985.3 366.0L987.6 366.3L989.9 365.7L992.2 366.3L994.5 365.9L996.8 366.0L999.1 366.3L1001.4 367.1L1003.7 367.2L1006.0 367.4L1008.2 367.6L1010.5 367.1L1012.8 367.5L1015.1 367.4L1017.4 367.3L1019.7 367.1L1022.0 367.1L1024.3 366.8L1026.6 366.9L1028.9 366.9L1031.2 367.4L1033.5 367.0L1035.8 366.9L1038.0 366.9L1040.3 367.5L1042.6 367.5L1044.9 367.3L1047.2 367.0L1049.5 367.0L1051.8 367.0L1054.1 367.2L1056.4 366.9L1058.7 367.2L1061.0 367.0L1063.2 367.6L1065.5 367.6L1067.8 367.2L1070.1 367.0L1072.4 367.6L1074.7 367.0L1077.0 367.1L1079.3 366.8L1081.6 367.1L1083.9 367.2L1086.2 367.2L1088.5 367.0L1090.8 367.2L1093.0 366.8L1095.3 367.0L1097.6 366.9L1099.9 367.1L1102.2 366.8L1104.5 366.8L1106.8 367.0L1109.1 367.0L1111.4 367.3L1113.7 367.2L1116.0 367.4L1118.2 367.3L1120.5 367.4L1122.8 367.5L1125.1 367.1L1127.4 367.1L1129.7 367.6L1132.0 366.9L1134.3 367.4L1136.6 367.3L1138.9 366.8L1141.2 367.5L1143.5 367.5L1145.8 367.3L1148.0 367.4L1150.3 367.4L1152.6 366.9L1154.9 367.2L1157.2 367.2L1159.5 367.5L1161.8 367.4L1164.1 367.5L1166.4 367.3L1168.7 367.5L1171.0 367.3L1173.2 367.4L1175.5 367.0L1177.8 366.8L1180.1 366.9L1182.4 367.1L1184.7 366.9L1187.0 367.5" fill="none" stroke="#1f78c1" stroke-width="1.5"/><path d="M912.0 436.6L914.3 436.6L916.6 436.6L918.9 436.7L921.2 436.5L923.5 436.0L925.8 436.8L928.0 436.7L930.3 436.5L932.6 436.5L934.9 436.7L937.2 436.1L939.5 436.7L941.8 436.3L944.1 436.1L946.4 436.3L948.7 436.7L951.0 436.2L953.2 436.7L955.5 437.0L957.8 436.5L960.1 436.4L962.4 436.5L964.7 436.7L967.0 436.8L969.3 436.6L971.6 436.6L973.9 436.1L976.2 436.1L978.5 436.3L980.8 436.7L983.0 436.3L985.3 436.6L987.6 436.0L989.9 436.1L992.2 436.3L994.5 436.7L996.8 436.7L999.1 436.7L1001.4 437.1L1003.7 437.3L1006.0 437.3L1008.2 437.3L1010.5 436.9L1012.8 437.7L1015.1 437.0L1017.4 437.8L1019.7 437.7L1022.0 436.8L1024.3 437.3L1026.6 437.6L1028.9 437.8L1031.2 437.2L1033.5 437.1L1035.8 437.0L1038.0 437.7L1040.3 437.0L1042.6 437.4L1044.9 436.9L1047.2 437.3L1049.5 437.8L1051.8 436.9L1054.1 437.6L1056.4 437.3L1058.7 437.7L1061.0 436.7L1063.2 436.2L1065.5 436.9L1067.8 436.5L1070.1 436.0L1072.4 436.0L1074.7 436.5L1077.0 436.5L1079.3 436.3L1081.6 436.1L1083.9 436.3L1086.2 436.3L1088.5 436.8L1090.8 436.0L1093.0 436.8L1095.3 436.8L1097.6 436.1L1099.9 436.9L1102.2 436.7L1104.5 436.9L1106.8 436.3L1109.1 436.4L1111.4 436.4L1113.7 437.0L1116.0 436.6L1118.2 436.4L1120.5 436.4L1122.8 436.3L1125.1 436.0L1127.4 436.1L1129.7 436.8L1132.0 436.3L1134.3 436.9L1136.6 436.2L1138.9 436.3L1141.2 436.5L1143.5 436.2L1145.8 436.4L1148.0 437.0L1150.3 436.9L1152.6 436.8L1154.9 436.6L1157.2 436.9L1159.5 436.9L1161.8 436.5L1164.1 436.7L1166.4 436.0L1168.7 436.7L1171.0 436.5L1173.2 436.8L1175.5 436.6L1177.8 436.3L1180.1 436.0L1182.4 436.9L1184.7 436.1L1187.0 436.5" fill="none" stroke="#629e51" stroke-width="1.3"/><path d="M1291 195.5H1646" stroke="#e7e7e7" stroke-width="1"/><path d="M1291 239.5H1646" stroke="#e7e7e7" stroke-width="1"/><path d="M1291 284.5H1646" stroke="#e7e7e7" stroke-width="1"/><path d="M1291 329.5H1646" stroke="#e7e7e7" stroke-width="1"/><path d="M1291 373.5H1646" stroke="#e7e7e7" stroke-width="1"/><path d="M1291 418.5H1646" stroke="#e7e7e7" stroke-width="1"/><path d="M1291 463.5H1646" stroke="#e7e7e7" stroke-width="1"/><path d="M1345.5 195V463" stroke="#e7e7e7" stroke-width="1"/><path d="M1404.5 195V463" stroke="#e7e7e7" stroke-width="1"/><path d="M1464.5 195V463" stroke="#e7e7e7" stroke-width="1"/><path d="M1523.5 195V463" stroke="#e7e7e7" stroke-width="1"/><path d="M1582.5 195V463" stroke="#e7e7e7" stroke-width="1"/><path d="M1641.5 195V463" stroke="#e7e7e7" stroke-width="1"/><path d="M1372.0 206.0L1373.3 229.0L1382.7 229.0L1384.1 217.5L1385.5 229.0L1394.5 229.0L1395.9 217.5L1397.3 229.0L1406.4 229.0L1407.8 217.5L1409.2 229.0L1418.2 229.0L1419.6 217.5L1421.0 229.0L1430.0 229.0L1431.4 217.5L1432.8 229.0L1441.8 229.0L1443.2 217.5L1444.7 229.0L1453.7 229.0L1455.1 217.5L1456.5 229.0L1465.5 229.0L1466.9 217.5L1468.3 229.0L1477.3 229.0L1478.7 217.5L1480.1 229.0L1489.2 229.0L1490.6 217.5L1492.0 229.0L1495.0 229.0L1496.4 206.0L1497.8 229.0L1501.0 229.0L1502.4 217.5L1503.8 229.0L1512.8 229.0L1514.2 217.5L1515.6 229.0L1524.7 229.0L1526.1 217.5L1527.5 229.0L1536.5 229.0L1537.9 217.5L1539.3 229.0L1548.3 229.0L1549.7 217.5L1551.1 229.0L1560.1 229.0L1561.5 217.5L1563.0 229.0L1572.0 229.0L1573.4 217.5L1574.8 229.0L1583.8 229.0L1585.2 217.5L1586.6 229.0L1595.6 229.0L1597.0 217.5L1598.4 229.0L1607.5 229.0L1608.9 217.5L1610.3 229.0L1619.3 229.0L1620.7 217.5L1622.1 229.0L1631.1 229.0L1632.5 217.5L1633.9 229.0L1643.0 229.0L1644.4 217.5L1645.8 229.0L1646.0 229.0L1646 240L1372 240Z" fill="#7eb26d" fill-opacity="0.1"/><path d="M1372.0 206.0L1373.3 229.0L1382.7 229.0L1384.1 217.5L1385.5 229.0L1394.5 229.0L1395.9 217.5L1397.3 229.0L1406.4 229.0L1407.8 217.5L1409.2 229.0L1418.2 229.0L1419.6 217.5L1421.0 229.0L1430.0 229.0L1431.4 217.5L1432.8 229.0L1441.8 229.0L1443.2 217.5L1444.7 229.0L1453.7 229.0L1455.1 217.5L1456.5 229.0L1465.5 229.0L1466.9 217.5L1468.3 229.0L1477.3 229.0L1478.7 217.5L1480.1 229.0L1489.2 229.0L1490.6 217.5L1492.0 229.0L1495.0 229.0L1496.4 206.0L1497.8 229.0L1501.0 229.0L1502.4 217.5L1503.8 229.0L1512.8 229.0L1514.2 217.5L1515.6 229.0L1524.7 229.0L1526.1 217.5L1527.5 229.0L1536.5 229.0L1537.9 217.5L1539.3 229.0L1548.3 229.0L1549.7 217.5L1551.1 229.0L1560.1 229.0L1561.5 217.5L1563.0 229.0L1572.0 229.0L1573.4 217.5L1574.8 229.0L1583.8 229.0L1585.2 217.5L1586.6 229.0L1595.6 229.0L1597.0 217.5L1598.4 229.0L1607.5 229.0L1608.9 217.5L1610.3 229.0L1619.3 229.0L1620.7 217.5L1622.1 229.0L1631.1 229.0L1632.5 217.5L1633.9 229.0L1643.0 229.0L1644.4 217.5L1645.8 229.0L1646.0 229.0" fill="none" stroke="#72a163" stroke-width="1.2"/><path d="M1372.0 435.0L1373.8 435.0L1375.7 435.7L1377.5 436.1L1379.3 434.9L1381.1 435.5L1383.0 435.0L1384.8 435.4L1386.6 435.1L1388.4 434.8L1390.3 434.8L1392.1 434.8L1393.9 435.9L1395.7 435.3L1397.6 434.9L1399.4 436.0L1401.2 436.1L1403.1 435.2L1404.9 434.7L1406.7 434.8L1408.5 434.6L1410.4 435.0L1412.2 434.6L1414.0 434.9L1415.8 434.9L1417.7 435.4L1419.5 435.9L1421.3 435.7L1423.1 435.2L1425.0 435.2L1426.8 435.3L1428.6 435.1L1430.5 435.0L1432.3 434.6L1434.1 434.9L1435.9 436.0L1437.8 434.7L1439.6 435.3L1441.4 435.5L1443.2 435.9L1445.1 434.8L1446.9 434.9L1448.7 434.9L1450.5 435.1L1452.4 435.2L1454.2 436.0L1456.0 435.9L1457.9 435.9L1459.7 434.5L1461.5 434.6L1463.3 435.6L1465.2 435.9L1467.0 435.3L1468.8 435.4L1470.6 434.5L1472.5 435.1L1474.3 436.0L1476.1 435.8L1477.9 435.9L1479.8 436.1L1481.6 434.9L1483.4 434.7L1485.3 434.7L1487.1 435.3L1488.9 435.6L1490.7 436.0L1492.6 435.7L1494.4 435.5L1496.2 435.7L1498.0 435.2L1499.9 435.4L1501.7 434.6L1503.5 435.8L1505.3 434.9L1507.2 436.0L1509.0 435.5L1510.8 435.0L1512.7 434.7L1514.5 434.9L1516.3 435.5L1518.1 435.6L1520.0 434.7L1521.8 434.6L1523.6 435.3L1525.4 435.4L1527.3 435.1L1529.1 434.9L1530.9 435.5L1532.7 434.5L1534.6 435.0L1536.4 435.2L1538.2 436.0L1540.1 435.5L1541.9 435.9L1543.7 435.3L1545.5 434.9L1547.4 434.9L1549.2 436.0L1551.0 435.6L1552.8 435.0L1554.7 434.5L1556.5 435.3L1558.3 435.6L1560.1 435.2L1562.0 434.9L1563.8 435.6L1565.6 436.0L1567.5 434.9L1569.3 434.6L1571.1 435.0L1572.9 435.2L1574.8 435.6L1576.6 434.8L1578.4 435.8L1580.2 435.7L1582.1 435.3L1583.9 434.8L1585.7 436.1L1587.5 435.0L1589.4 435.8L1591.2 434.9L1593.0 434.9L1594.9 435.7L1596.7 435.0L1598.5 436.0L1600.3 435.3L1602.2 434.8L1604.0 434.9L1605.8 435.2L1607.6 435.6L1609.5 436.0L1611.3 434.7L1613.1 435.1L1614.9 434.8L1616.8 436.1L1618.6 434.7L1620.4 434.6L1622.3 434.6L1624.1 435.1L1625.9 435.9L1627.7 435.9L1629.6 435.7L1631.4 436.1L1633.2 436.0L1635.0 435.0L1636.9 434.8L1638.7 436.0L1640.5 435.7L1642.3 434.6L1644.2 435.6L1646.0 435.1L1646 240L1372 240Z" fill="#eab839" fill-opacity="0.1"/><path d="M1372.0 435.0L1373.8 435.0L1375.7 435.7L1377.5 436.1L1379.3 434.9L1381.1 435.5L1383.0 435.0L1384.8 435.4L1386.6 435.1L1388.4 434.8L1390.3 434.8L1392.1 434.8L1393.9 435.9L1395.7 435.3L1397.6 434.9L1399.4 436.0L1401.2 436.1L1403.1 435.2L1404.9 434.7L1406.7 434.8L1408.5 434.6L1410.4 435.0L1412.2 434.6L1414.0 434.9L1415.8 434.9L1417.7 435.4L1419.5 435.9L1421.3 435.7L1423.1 435.2L1425.0 435.2L1426.8 435.3L1428.6 435.1L1430.5 435.0L1432.3 434.6L1434.1 434.9L1435.9 436.0L1437.8 434.7L1439.6 435.3L1441.4 435.5L1443.2 435.9L1445.1 434.8L1446.9 434.9L1448.7 434.9L1450.5 435.1L1452.4 435.2L1454.2 436.0L1456.0 435.9L1457.9 435.9L1459.7 434.5L1461.5 434.6L1463.3 435.6L1465.2 435.9L1467.0 435.3L1468.8 435.4L1470.6 434.5L1472.5 435.1L1474.3 436.0L1476.1 435.8L1477.9 435.9L1479.8 436.1L1481.6 434.9L1483.4 434.7L1485.3 434.7L1487.1 435.3L1488.9 435.6L1490.7 436.0L1492.6 435.7L1494.4 435.5L1496.2 435.7L1498.0 435.2L1499.9 435.4L1501.7 434.6L1503.5 435.8L1505.3 434.9L1507.2 436.0L1509.0 435.5L1510.8 435.0L1512.7 434.7L1514.5 434.9L1516.3 435.5L1518.1 435.6L1520.0 434.7L1521.8 434.6L1523.6 435.3L1525.4 435.4L1527.3 435.1L1529.1 434.9L1530.9 435.5L1532.7 434.5L1534.6 435.0L1536.4 435.2L1538.2 436.0L1540.1 435.5L1541.9 435.9L1543.7 435.3L1545.5 434.9L1547.4 434.9L1549.2 436.0L1551.0 435.6L1552.8 435.0L1554.7 434.5L1556.5 435.3L1558.3 435.6L1560.1 435.2L1562.0 434.9L1563.8 435.6L1565.6 436.0L1567.5 434.9L1569.3 434.6L1571.1 435.0L1572.9 435.2L1574.8 435.6L1576.6 434.8L1578.4 435.8L1580.2 435.7L1582.1 435.3L1583.9 434.8L1585.7 436.1L1587.5 435.0L1589.4 435.8L1591.2 434.9L1593.0 434.9L1594.9 435.7L1596.7 435.0L1598.5 436.0L1600.3 435.3L1602.2 434.8L1604.0 434.9L1605.8 435.2L1607.6 435.6L1609.5 436.0L1611.3 434.7L1613.1 435.1L1614.9 434.8L1616.8 436.1L1618.6 434.7L1620.4 434.6L1622.3 434.6L1624.1 435.1L1625.9 435.9L1627.7 435.9L1629.6 435.7L1631.4 436.1L1633.2 436.0L1635.0 435.0L1636.9 434.8L1638.7 436.0L1640.5 435.7L1642.3 434.6L1644.2 435.6L1646.0 435.1" fill="none" stroke="#dcab4e" stroke-width="1.2"/><path d="M1756 195.5H1876" stroke="#e7e7e7" stroke-width="1"/><path d="M1756 209.5H1876" stroke="#e7e7e7" stroke-width="1"/><path d="M1756 223.5H1876" stroke="#e7e7e7" stroke-width="1"/><path d="M1756 238.5H1876" stroke="#e7e7e7" stroke-width="1"/><path d="M1756 252.5H1876" stroke="#e7e7e7" stroke-width="1"/><path d="M1794.5 195V252" stroke="#e7e7e7" stroke-width="1"/><path d="M1854.5 195V252" stroke="#e7e7e7" stroke-width="1"/><path d="M1783 223.5H1876" stroke="#e0a95a" stroke-width="1.5"/><path d="M1756 385.5H1876" stroke="#e7e7e7" stroke-width="1"/><path d="M1756 399.5H1876" stroke="#e7e7e7" stroke-width="1"/><path d="M1756 413.5H1876" stroke="#e7e7e7" stroke-width="1"/><path d="M1756 428.5H1876" stroke="#e7e7e7" stroke-width="1"/><path d="M1756 442.5H1876" stroke="#e7e7e7" stroke-width="1"/><path d="M1794.5 385V442" stroke="#e7e7e7" stroke-width="1"/><path d="M1854.5 385V442" stroke="#e7e7e7" stroke-width="1"/><path d="M1783 413.5H1876" stroke="#e0a95a" stroke-width="1.5"/><path d="M149 613.5H881" stroke="#e7e7e7" stroke-width="1"/><path d="M149 675.5H881" stroke="#e7e7e7" stroke-width="1"/><path d="M149 738.5H881" stroke="#e7e7e7" stroke-width="1"/><path d="M149 801.5H881" stroke="#e7e7e7" stroke-width="1"/><path d="M149 864.5H881" stroke="#e7e7e7" stroke-width="1"/><path d="M200.5 613V864" stroke="#e7e7e7" stroke-width="1"/><path d="M261.5 613V864" stroke="#e7e7e7" stroke-width="1"/><path d="M322.5 613V864" stroke="#e7e7e7" stroke-width="1"/><path d="M383.5 613V864" stroke="#e7e7e7" stroke-width="1"/><path d="M444.5 613V864" stroke="#e7e7e7" stroke-width="1"/><path d="M505.5 613V864" stroke="#e7e7e7" stroke-width="1"/><path d="M566.5 613V864" stroke="#e7e7e7" stroke-width="1"/><path d="M627.5 613V864" stroke="#e7e7e7" stroke-width="1"/><path d="M688.5 613V864" stroke="#e7e7e7" stroke-width="1"/><path d="M749.5 613V864" stroke="#e7e7e7" stroke-width="1"/><path d="M810.5 613V864" stroke="#e7e7e7" stroke-width="1"/><path d="M871.5 613V864" stroke="#e7e7e7" stroke-width="1"/><path d="M1061 613.5H1799" stroke="#e7e7e7" stroke-width="1"/><path d="M1061 675.5H1799" stroke="#e7e7e7" stroke-width="1"/><path d="M1061 738.5H1799" stroke="#e7e7e7" stroke-width="1"/><path d="M1061 801.5H1799" stroke="#e7e7e7" stroke-width="1"/><path d="M1061 864.5H1799" stroke="#e7e7e7" stroke-width="1"/><path d="M1112.5 613V864" stroke="#e7e7e7" stroke-width="1"/><path d="M1173.5 613V864" stroke="#e7e7e7" stroke-width="1"/><path d="M1235.5 613V864" stroke="#e7e7e7" stroke-width="1"/><path d="M1297.5 613V864" stroke="#e7e7e7" stroke-width="1"/><path d="M1358.5 613V864" stroke="#e7e7e7" stroke-width="1"/><path d="M1420.5 613V864" stroke="#e7e7e7" stroke-width="1"/><path d="M1481.5 613V864" stroke="#e7e7e7" stroke-width="1"/><path d="M1543.5 613V864" stroke="#e7e7e7" stroke-width="1"/><path d="M1604.5 613V864" stroke="#e7e7e7" stroke-width="1"/><path d="M1666.5 613V864" stroke="#e7e7e7" stroke-width="1"/><path d="M1727.5 613V864" stroke="#e7e7e7" stroke-width="1"/><path d="M1789.5 613V864" stroke="#e7e7e7" stroke-width="1"/></svg>
<div class="t tm" style="left:183px;top:254px;font-size:30px;color:#52545c;font-weight:bold;">N/A</div>
<div class="t tm" style="left:183px;top:444px;font-size:30px;color:#52545c;font-weight:bold;">N/A</div>
<div class="t" style="left:183px;top:254px;font-size:30px;color:#52545c;font-weight:normal;"></div>
<div class="t te" style="left:353px;top:194.5px;font-size:11px;color:#52545c;font-weight:normal;">20%</div>
<div class="t te" style="left:353px;top:261.5px;font-size:11px;color:#52545c;font-weight:normal;">15%</div>
<div class="t te" style="left:353px;top:328.5px;font-size:11px;color:#52545c;font-weight:normal;">10%</div>
<div class="t te" style="left:353px;top:395.5px;font-size:11px;color:#52545c;font-weight:normal;">5%</div>
<div class="t te" style="left:353px;top:462.5px;font-size:11px;color:#52545c;font-weight:normal;">0%</div>
<div class="t tm" style="left:415.8px;top:476px;font-size:11px;color:#52545c;font-weight:normal;">17:20</div>
<div class="t tm" style="left:477.44px;top:476px;font-size:11px;color:#52545c;font-weight:normal;">17:30</div>
<div class="t tm" style="left:539.08px;top:476px;font-size:11px;color:#52545c;font-weight:normal;">17:40</div>
<div class="t tm" style="left:600.72px;top:476px;font-size:11px;color:#52545c;font-weight:normal;">17:50</div>
<div class="t tm" style="left:662.36px;top:476px;font-size:11px;color:#52545c;font-weight:normal;">18:00</div>
<div class="t tm" style="left:724.0px;top:476px;font-size:11px;color:#52545c;font-weight:normal;">18:10</div>
<div class="t" style="left:318.8px;top:336px;font-size:12px;color:#52545c;transform:translate(-50%,-50%) rotate(-90deg);">% Utilization</div>
<div class="lg" style="left:321px;top:499.5px;background:#7eb26d"></div>
<div class="t" style="left:337px;top:502px;font-size:12px;color:#52545c;font-weight:normal;">iowait</div>
<div class="lg" style="left:380px;top:499.5px;background:#eab839"></div>
<div class="t" style="left:396px;top:502px;font-size:12px;color:#52545c;font-weight:normal;">irq</div>
<div class="lg" style="left:420px;top:499.5px;background:#6ed0e0"></div>
<div class="t" style="left:436px;top:502px;font-size:12px;color:#52545c;font-weight:normal;">nice</div>
<div class="lg" style="left:469px;top:499.5px;background:#ef843c"></div>
<div class="t" style="left:485px;top:502px;font-size:12px;color:#52545c;font-weight:normal;">softirq</div>
<div class="lg" style="left:530px;top:499.5px;background:#58505f"></div>
<div class="t" style="left:546px;top:502px;font-size:12px;color:#52545c;font-weight:normal;">steal</div>
<div class="lg" style="left:582px;top:499.5px;background:#99261a"></div>
<div class="t" style="left:598px;top:502px;font-size:12px;color:#52545c;font-weight:normal;">system</div>
<div class="lg" style="left:647px;top:499.5px;background:#3f6833"></div>
<div class="t" style="left:663px;top:502px;font-size:12px;color:#52545c;font-weight:normal;">user</div>
<div class="t te" style="left:825px;top:194.5px;font-size:11px;color:#52545c;font-weight:normal;">33 GiB</div>
<div class="t te" style="left:825px;top:232.5px;font-size:11px;color:#52545c;font-weight:normal;">28 GiB</div>
<div class="t te" style="left:825px;top:270.5px;font-size:11px;color:#52545c;font-weight:normal;">23 GiB</div>
<div class="t te" style="left:825px;top:309.5px;font-size:11px;color:#52545c;font-weight:normal;">19 GiB</div>
<div class="t te" style="left:825px;top:347.5px;font-size:11px;color:#52545c;font-weight:normal;">14 GiB</div>
<div class="t te" style="left:825px;top:385.5px;font-size:11px;color:#52545c;font-weight:normal;">9 GiB</div>
<div class="t te" style="left:825px;top:423.5px;font-size:11px;color:#52545c;font-weight:normal;">5 GiB</div>
<div class="t te" style="left:825px;top:462.5px;font-size:11px;color:#52545c;font-weight:normal;">0 B</div>
<div class="t tm" style="left:885.3px;top:476px;font-size:11px;color:#52545c;font-weight:normal;">17:20</div>
<div class="t tm" style="left:944.6999999999999px;top:476px;font-size:11px;color:#52545c;font-weight:normal;">17:30</div>
<div class="t tm" style="left:1004.0999999999999px;top:476px;font-size:11px;color:#52545c;font-weight:normal;">17:40</div>
<div class="t tm" style="left:1063.5px;top:476px;font-size:11px;color:#52545c;font-weight:normal;">17:50</div>
<div class="t tm" style="left:1122.8999999999999px;top:476px;font-size:11px;color:#52545c;font-weight:normal;">18:00</div>
<div class="t tm" style="left:1182.3px;top:476px;font-size:11px;color:#52545c;font-weight:normal;">18:10</div>
<div class="t" style="left:777.8px;top:336px;font-size:12px;color:#52545c;transform:translate(-50%,-50%) rotate(-90deg);">RAM used</div>
<div class="lg" style="left:780px;top:499.5px;background:#629e51"></div>
<div class="t" style="left:797px;top:502px;font-size:12px;color:#52545c;font-weight:normal;">Free</div>
<div class="lg" style="left:830px;top:499.5px;background:#bf1b00"></div>
<div class="t" style="left:847px;top:502px;font-size:12px;color:#52545c;font-weight:normal;">total</div>
<div class="lg" style="left:880px;top:499.5px;background:#64b0c8"></div>
<div class="t" style="left:897px;top:502px;font-size:12px;color:#52545c;font-weight:normal;">buffers/cache</div>
<div class="lg" style="left:981px;top:499.5px;background:#1f78c1"></div>
<div class="t" style="left:998px;top:502px;font-size:12px;color:#52545c;font-weight:normal;">used</div>
<div class="t te" style="left:1285px;top:194.5px;font-size:11px;color:#52545c;font-weight:normal;">500 B</div>
<div class="t te" style="left:1285px;top:238.5px;font-size:11px;color:#52545c;font-weight:normal;">0 B</div>
<div class="t te" style="left:1285px;top:283.5px;font-size:11px;color:#52545c;font-weight:normal;">-500 B</div>
<div class="t te" style="left:1285px;top:328.5px;font-size:11px;color:#52545c;font-weight:normal;">-1.0 kB</div>
<div class="t te" style="left:1285px;top:372.5px;font-size:11px;color:#52545c;font-weight:normal;">-1.5 kB</div>
<div class="t te" style="left:1285px;top:417.5px;font-size:11px;color:#52545c;font-weight:normal;">-2.0 kB</div>
<div class="t te" style="left:1285px;top:462.5px;font-size:11px;color:#52545c;font-weight:normal;">-2.5 kB</div>
<div class="t tm" style="left:1345.7px;top:476px;font-size:11px;color:#52545c;font-weight:normal;">17:20</div>
<div class="t tm" style="left:1404.9px;top:476px;font-size:11px;color:#52545c;font-weight:normal;">17:30</div>
<div class="t tm" style="left:1464.1000000000001px;top:476px;font-size:11px;color:#52545c;font-weight:normal;">17:40</div>
<div class="t tm" style="left:1523.3000000000002px;top:476px;font-size:11px;color:#52545c;font-weight:normal;">17:50</div>
<div class="t tm" style="left:1582.5px;top:476px;font-size:11px;color:#52545c;font-weight:normal;">18:00</div>
<div class="t tm" style="left:1641.7px;top:476px;font-size:11px;color:#52545c;font-weight:normal;">18:10</div>
<div class="t" style="left:1237.8px;top:336px;font-size:12px;color:#52545c;transform:translate(-50%,-50%) rotate(-90deg);">Send (-) / Receive (+)</div>
<div class="lg" style="left:1240px;top:499.5px;background:#7eb26d"></div>
<div class="t" style="left:1255px;top:502px;font-size:12px;color:#52545c;font-weight:normal;">eth0.rx</div>
<div class="lg" style="left:1303px;top:499.5px;background:#eab839"></div>
<div class="t" style="left:1318px;top:502px;font-size:12px;color:#52545c;font-weight:normal;">eth0.tx</div>
<div class="t te" style="left:1750px;top:194.5px;font-size:11px;color:#52545c;font-weight:normal;">1.0 pps</div>
<div class="t te" style="left:1750px;top:208.5px;font-size:11px;color:#52545c;font-weight:normal;">0.5 pps</div>
<div class="t te" style="left:1750px;top:222.5px;font-size:11px;color:#52545c;font-weight:normal;">0 pps</div>
<div class="t te" style="left:1750px;top:237.5px;font-size:11px;color:#52545c;font-weight:normal;">-0.5 pps</div>
<div class="t te" style="left:1750px;top:251.5px;font-size:11px;color:#52545c;font-weight:normal;">-1.0 pps</div>
<div class="t tm" style="left:1794.4px;top:264.8px;font-size:11px;color:#52545c;font-weight:normal;">17:30</div>
<div class="t tm" style="left:1854.4px;top:264.8px;font-size:11px;color:#52545c;font-weight:normal;">18:00</div>
<div class="abs" style="left:1680px;top:179px;width:30px;height:120px;overflow:hidden"><div class="t" style="left:15px;top:50.900000000000006px;font-size:11.5px;color:#52545c;transform:translate(-50%,-50%) rotate(-90deg)">Send (-) / Receive (+)</div></div>
<div class="lg" style="left:1698px;top:288.5px;background:#7eb26d"></div>
<div class="t" style="left:1715px;top:291px;font-size:12px;color:#52545c;font-weight:normal;">eth0.rx</div>
<div class="lg" style="left:1761px;top:288.5px;background:#eab839"></div>
<div class="t" style="left:1778px;top:291px;font-size:12px;color:#52545c;font-weight:normal;">lo.rx</div>
<div class="lg" style="left:1811px;top:288.5px;background:#6ed0e0"></div>
<div class="t" style="left:1827px;top:291px;font-size:12px;color:#52545c;font-weight:normal;">eth0.tx</div>
<div class="lg" style="left:1698px;top:309.5px;background:#ef843c"></div>
<div class="t" style="left:1715px;top:312px;font-size:12px;color:#52545c;font-weight:normal;">lo.tx</div>
<div class="t te" style="left:1750px;top:384.5px;font-size:11px;color:#52545c;font-weight:normal;">1.0 pps</div>
<div class="t te" style="left:1750px;top:398.5px;font-size:11px;color:#52545c;font-weight:normal;">0.5 pps</div>
<div class="t te" style="left:1750px;top:412.5px;font-size:11px;color:#52545c;font-weight:normal;">0 pps</div>
<div class="t te" style="left:1750px;top:427.5px;font-size:11px;color:#52545c;font-weight:normal;">-0.5 pps</div>
<div class="t te" style="left:1750px;top:441.5px;font-size:11px;color:#52545c;font-weight:normal;">-1.0 pps</div>
<div class="t tm" style="left:1794.4px;top:454.8px;font-size:11px;color:#52545c;font-weight:normal;">17:30</div>
<div class="t tm" style="left:1854.4px;top:454.8px;font-size:11px;color:#52545c;font-weight:normal;">18:00</div>
<div class="abs" style="left:1680px;top:369px;width:30px;height:120px;overflow:hidden"><div class="t" style="left:15px;top:50.900000000000006px;font-size:11.5px;color:#52545c;transform:translate(-50%,-50%) rotate(-90deg)">Send (-) / Receive (+)</div></div>
<div class="lg" style="left:1698px;top:478.5px;background:#7eb26d"></div>
<div class="t" style="left:1715px;top:481px;font-size:12px;color:#52545c;font-weight:normal;">eth0.rx</div>
<div class="lg" style="left:1761px;top:478.5px;background:#eab839"></div>
<div class="t" style="left:1778px;top:481px;font-size:12px;color:#52545c;font-weight:normal;">lo.rx</div>
<div class="lg" style="left:1811px;top:478.5px;background:#6ed0e0"></div>
<div class="t" style="left:1827px;top:481px;font-size:12px;color:#52545c;font-weight:normal;">eth0.tx</div>
<div class="lg" style="left:1698px;top:499.5px;background:#ef843c"></div>
<div class="t" style="left:1715px;top:502px;font-size:12px;color:#52545c;font-weight:normal;">lo.tx</div>
<div class="t te" style="left:143px;top:612.5px;font-size:11px;color:#52545c;font-weight:normal;">1.0 ops</div>
<div class="t te" style="left:143px;top:674.5px;font-size:11px;color:#52545c;font-weight:normal;">0.5 ops</div>
<div class="t te" style="left:143px;top:737.5px;font-size:11px;color:#52545c;font-weight:normal;">0 ops</div>
<div class="t te" style="left:143px;top:800.5px;font-size:11px;color:#52545c;font-weight:normal;">-0.5 ops</div>
<div class="t te" style="left:143px;top:863.5px;font-size:11px;color:#52545c;font-weight:normal;">-1.0 ops</div>
<div class="t tm" style="left:200.1px;top:877px;font-size:11px;color:#52545c;font-weight:normal;">17:15</div>
<div class="t tm" style="left:261.13px;top:877px;font-size:11px;color:#52545c;font-weight:normal;">17:20</div>
<div class="t tm" style="left:322.15999999999997px;top:877px;font-size:11px;color:#52545c;font-weight:normal;">17:25</div>
<div class="t tm" style="left:383.19px;top:877px;font-size:11px;color:#52545c;font-weight:normal;">17:30</div>
<div class="t tm" style="left:444.22px;top:877px;font-size:11px;color:#52545c;font-weight:normal;">17:35</div>
<div class="t tm" style="left:505.25px;top:877px;font-size:11px;color:#52545c;font-weight:normal;">17:40</div>
<div class="t tm" style="left:566.28px;top:877px;font-size:11px;color:#52545c;font-weight:normal;">17:45</div>
<div class="t tm" style="left:627.3100000000001px;top:877px;font-size:11px;color:#52545c;font-weight:normal;">17:50</div>
<div class="t tm" style="left:688.34px;top:877px;font-size:11px;color:#52545c;font-weight:normal;">17:55</div>
<div class="t tm" style="left:749.37px;top:877px;font-size:11px;color:#52545c;font-weight:normal;">18:00</div>
<div class="t tm" style="left:810.4px;top:877px;font-size:11px;color:#52545c;font-weight:normal;">18:05</div>
<div class="t tm" style="left:871.4300000000001px;top:877px;font-size:11px;color:#52545c;font-weight:normal;">18:10</div>
<div class="t" style="left:88px;top:745px;font-size:12px;color:#52545c;transform:translate(-50%,-50%) rotate(-90deg);">Read (-) / Write (+)</div>
<div class="t tm" style="left:488.5px;top:714.5px;font-size:14px;color:#52545c;font-weight:normal;">No data</div>
<div class="t te" style="left:1055px;top:612.5px;font-size:11px;color:#52545c;font-weight:normal;">1.0 Bs</div>
<div class="t te" style="left:1055px;top:674.5px;font-size:11px;color:#52545c;font-weight:normal;">0.5 Bs</div>
<div class="t te" style="left:1055px;top:737.5px;font-size:11px;color:#52545c;font-weight:normal;">0 Bs</div>
<div class="t te" style="left:1055px;top:800.5px;font-size:11px;color:#52545c;font-weight:normal;">-0.5 Bs</div>
<div class="t te" style="left:1055px;top:863.5px;font-size:11px;color:#52545c;font-weight:normal;">-1.0 Bs</div>
<div class="t tm" style="left:1112.4px;top:877px;font-size:11px;color:#52545c;font-weight:normal;">17:15</div>
<div class="t tm" style="left:1173.95px;top:877px;font-size:11px;color:#52545c;font-weight:normal;">17:20</div>
<div class="t tm" style="left:1235.5px;top:877px;font-size:11px;color:#52545c;font-weight:normal;">17:25</div>
<div class="t tm" style="left:1297.0500000000002px;top:877px;font-size:11px;color:#52545c;font-weight:normal;">17:30</div>
<div class="t tm" style="left:1358.6000000000001px;top:877px;font-size:11px;color:#52545c;font-weight:normal;">17:35</div>
<div class="t tm" style="left:1420.15px;top:877px;font-size:11px;color:#52545c;font-weight:normal;">17:40</div>
<div class="t tm" style="left:1481.7px;top:877px;font-size:11px;color:#52545c;font-weight:normal;">17:45</div>
<div class="t tm" style="left:1543.25px;top:877px;font-size:11px;color:#52545c;font-weight:normal;">17:50</div>
<div class="t tm" style="left:1604.8000000000002px;top:877px;font-size:11px;color:#52545c;font-weight:normal;">17:55</div>
<div class="t tm" style="left:1666.35px;top:877px;font-size:11px;color:#52545c;font-weight:normal;">18:00</div>
<div class="t tm" style="left:1727.9px;top:877px;font-size:11px;color:#52545c;font-weight:normal;">18:05</div>
<div class="t tm" style="left:1789.45px;top:877px;font-size:11px;color:#52545c;font-weight:normal;">18:10</div>
<div class="t" style="left:1006px;top:745px;font-size:12px;color:#52545c;transform:translate(-50%,-50%) rotate(-90deg);">Read (-) / Write (+)</div>
<div class="t tm" style="left:1406.5px;top:714.5px;font-size:14px;color:#52545c;font-weight:normal;">No data</div>
</body></html>
